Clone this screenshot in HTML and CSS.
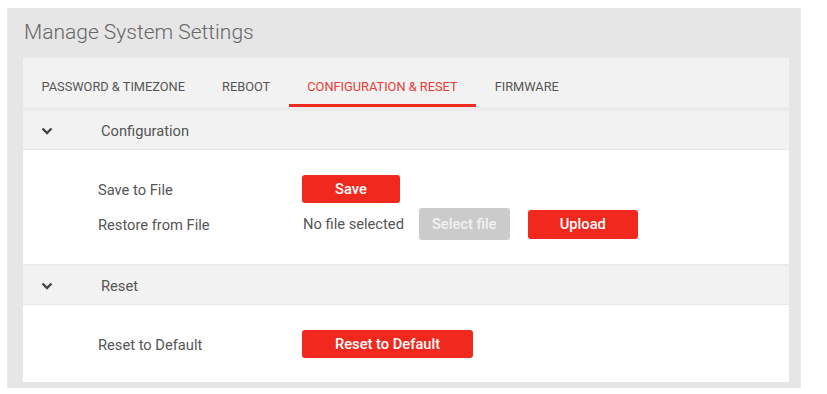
FILE: index.html
```html
<!DOCTYPE html>
<html>
<head>
<meta charset="utf-8">
<link rel="stylesheet" href="styles.css">
</head>
<body>
<div class="panel">
  <div class="title">Manage System Settings</div>
  <div class="card">
    <div class="tabs">
      <div class="tab">PASSWORD &amp; TIMEZONE</div>
      <div class="tab">REBOOT</div>
      <div class="tab active">CONFIGURATION &amp; RESET</div>
      <div class="tab">FIRMWARE</div>
    </div>
    <div class="section first">
      <div class="section-head">
        <svg class="chev" width="12" height="8" viewBox="0 0 12 8"><path d="M1.5 1.5 L6 6 L10.5 1.5" fill="none" stroke="#444" stroke-width="2.4"/></svg>
        <span class="head-text">Configuration</span>
      </div>
      <div class="section-body">
        <div class="row">
          <div class="label">Save to File</div>
          <div class="controls"><button class="btn">Save</button></div>
        </div>
        <div class="row">
          <div class="label">Restore from File</div>
          <div class="controls">
            <span class="nofile">No file selected</span>
            <button class="btn-file">Select file</button>
            <button class="btn upload">Upload</button>
          </div>
        </div>
      </div>
    </div>
    <div class="section second">
      <div class="section-head">
        <svg class="chev" width="12" height="8" viewBox="0 0 12 8"><path d="M1.5 1.5 L6 6 L10.5 1.5" fill="none" stroke="#444" stroke-width="2.4"/></svg>
        <span class="head-text">Reset</span>
      </div>
      <div class="section-body">
        <div class="row">
          <div class="label">Reset to Default</div>
          <div class="controls"><button class="btn">Reset to Default</button></div>
        </div>
      </div>
    </div>
  </div>
</div>
</body>
</html>
```
FILE: styles.css
```css
* { box-sizing: border-box; }
html, body { margin: 0; padding: 0; background: #fff; }
body { font-family: Roboto, "Liberation Sans", sans-serif; }
.panel {
  width: 794px;
  margin: 8px 0 0 7px;
  background: #e6e6e6;
  padding: 0 12px 6px 16px;
}
.title {
  height: 50px;
  padding: 12px 0 0 1px;
  font-size: 21px;
  font-weight: 300;
  color: #666;
  line-height: 24px;
}
.card { background: #ebebeb; }
.tabs {
  display: flex;
  height: 49px;
  background: #f2f2f2;
}
.tab {
  padding: 11px 18.5px 0;
  height: 49px;
  display: flex;
  align-items: center;
  font-size: 12.8px;
  color: #555;
  border-bottom: 3px solid transparent;
}
.tab.active {
  color: #ea3a34;
  border-bottom-color: #ee2a22;
}
.section.first { margin-top: 4px; }
.section.second { margin-top: 2px; }
.section-head {
  height: 39px;
  background: #f2f2f2;
  display: flex;
  align-items: center;
  padding-top: 1px;
  border-bottom: 1px solid #e8e8e8;
}
.chev { margin-left: 18px; margin-top: 1px; }
.head-text {
  margin-left: 48px;
  font-size: 14.7px;
  color: #555;
}
.section-body {
  background: #fff;
  padding: 25px 0 24px 75px;
  display: flex;
  flex-direction: column;
  gap: 5px;
}
.row { display: flex; align-items: center; }
.label {
  width: 204px;
  font-size: 14.7px;
  color: #555;
  padding-top: 2px;
}
.controls { display: flex; align-items: center; }
.btn {
  height: 28px;
  padding: 0 33px;
  border: 0;
  border-radius: 3px;
  background: #f0281e;
  color: #fff;
  font-family: Roboto, "Liberation Sans", sans-serif;
  font-size: 14.7px;
  font-weight: 500;
}
.btn.upload { height: 29px; margin-left: 18px; padding: 0 32px; }
.nofile {
  font-size: 14.7px;
  color: #555;
  margin-left: 1px;
}
.btn-file {
  height: 32px;
  margin-left: 15px;
  padding: 0 13px;
  border: 0;
  border-radius: 3px;
  background: #cbcbcb;
  color: #f2f2f2;
  font-family: Roboto, "Liberation Sans", sans-serif;
  font-size: 14.7px;
  font-weight: 500;
}
```
